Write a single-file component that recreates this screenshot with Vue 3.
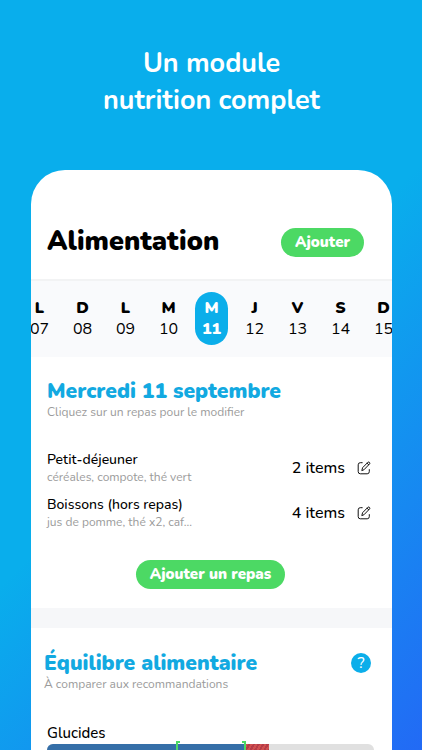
<template>
    <div class="page">
        <h1 class="tagline">Un module<br />nutrition complet</h1>

        <main class="phone">
            <header class="top-bar">
                <h2 class="top-title">Alimentation</h2>
                <button type="button" class="btn">Ajouter</button>
            </header>

            <nav class="days" aria-label="Jours">
                <button v-for="day in days" :key="day.num" type="button" class="day"
                    :class="{ active: day.num == selected }" @click="selected = day.num">
                    <span class="day-pill">
                        <b class="day-name">{{ day.name }}</b>
                        <span class="day-num">{{ day.num }}</span>
                    </span>
                </button>
            </nav>

            <section class="meals">
                <h3 class="section-title">Mercredi 11 septembre</h3>
                <p class="hint">Cliquez sur un repas pour le modifier</p>

                <ul class="meal-list">
                    <li v-for="meal in meals" :key="meal.name" class="meal">
                        <div class="meal-text">
                            <p class="meal-name">{{ meal.name }}</p>
                            <p class="meal-detail">{{ meal.detail }}</p>
                        </div>
                        <span class="meal-count">{{ meal.count }} items</span>
                        <button type="button" class="edit" :aria-label="`Modifier ${meal.name}`">
                            <svg viewBox="0 0 14 14" width="14" height="14" fill="none" stroke="#111"
                                stroke-linecap="round" stroke-linejoin="round">
                                <path d="M5.2 1.7H3.3Q1.2 1.7 1.2 3.8V10.6Q1.2 12.8 3.3 12.8H10.2Q12.3 12.8 12.3 10.6V8.6" />
                                <path d="M4.9 9.2L5.6 6.7L11 1.2Q11.7.7 12.5 1.4Q13.2 2.2 12.6 2.9L7.2 8.5Z" />
                                <path d="M10.1 2.2L11.7 3.8" />
                            </svg>
                        </button>
                    </li>
                </ul>

                <button type="button" class="btn">Ajouter un repas</button>
            </section>

            <section class="balance">
                <div class="balance-head">
                    <div>
                        <h3 class="section-title">Équilibre alimentaire</h3>
                        <p class="hint">À comparer aux recommandations</p>
                    </div>
                    <button type="button" class="help" aria-label="Aide">?</button>
                </div>

                <div v-for="item in nutrients" :key="item.name" class="nutrient">
                    <p class="nutrient-name">{{ item.name }}</p>
                    <div class="gauge">
                        <div class="track">
                            <div class="fill" :style="{ width: item.fill + '%' }"></div>
                            <div class="excess" :style="{ width: item.excess + '%' }"></div>
                        </div>
                        <div class="target" :style="{ left: item.from + '%', width: item.to - item.from + '%' }"></div>
                    </div>
                </div>
            </section>
        </main>
    </div>
</template>

<script setup>
import { ref } from "vue";

const selected = ref("11");

const days = [
    { name: "L", num: "07" },
    { name: "D", num: "08" },
    { name: "L", num: "09" },
    { name: "M", num: "10" },
    { name: "M", num: "11" },
    { name: "J", num: "12" },
    { name: "V", num: "13" },
    { name: "S", num: "14" },
    { name: "D", num: "15" },
];

const meals = [
    { name: "Petit-déjeuner", detail: "céréales, compote, thé vert", count: 2 },
    { name: "Boissons (hors repas)", detail: "jus de pomme, thé x2, caf...", count: 4 },
];

// all values are percentages of the gauge
const nutrients = [
    { name: "Glucides", fill: 61, excess: 7, from: 39.5, to: 61 },
];
</script>

<style>
body {
    margin: 0;
}
</style>

<style scoped>
.page {
    display: flex;
    flex-direction: column;
    box-sizing: border-box;
    height: 100vh;
    padding: 45px 30px 0 31px;
    overflow: hidden;
    background: linear-gradient(135deg, #09aeec 0%, #09aeec 50%, #226af5 100%);
    color: #000;
    font-family: Nunito, Lato, sans-serif;
}

h1,
h2,
h3,
p,
ul {
    margin: 0;
    padding: 0;
}

button {
    padding: 0;
    border: 0;
    background: none;
    color: inherit;
    font-family: inherit;
    cursor: pointer;
}

.tagline {
    color: #fff;
    font-size: 27px;
    font-weight: 700;
    line-height: 37px;
    text-align: center;
}

.phone {
    flex: 1;
    min-height: 0;
    margin-top: 51px;
    overflow: hidden;
    border-radius: 34px 34px 0 0;
    background: #fff;
}

.top-bar {
    display: flex;
    align-items: center;
    justify-content: space-between;
    padding: 57px 28px 22px 16px;
    border-bottom: 2px solid #f2f3f4;
}

.top-title {
    font-size: 27px;
    font-weight: 900;
    line-height: 30px;
}

.btn {
    height: 29px;
    padding: 0 14px;
    border-radius: 15px;
    background: #4cd964;
    color: #fff;
    font-size: 15px;
    font-weight: 900;
    line-height: 29px;
}

.days {
    display: flex;
    justify-content: center;
    padding: 11px 0 12px;
    background: #f9fafc;
}

.day {
    display: flex;
    flex: none;
    justify-content: center;
    width: 43px;
}

.day-pill {
    display: flex;
    flex-direction: column;
    box-sizing: border-box;
    width: 33px;
    height: 53px;
    padding-top: 6px;
    border-radius: 17px;
    font-size: 16px;
    line-height: 21px;
}

.day-name {
    font-weight: 900;
}

.active .day-pill {
    background: #0baeea;
    color: #fff;
    font-weight: 900;
}

.meals {
    padding: 21px 18px 19px 16px;
    border-bottom: 20px solid #f6f7f9;
    text-align: center;
}

.section-title {
    color: #12a9e1;
    font-size: 21px;
    font-weight: 900;
    line-height: 26px;
    text-align: left;
}

.hint {
    color: #9b9b9b;
    font-size: 12px;
    line-height: 16px;
    text-align: left;
}

.meal-list {
    margin: 31px 3px 30px 0;
    list-style: none;
    text-align: left;
}

.meal {
    display: flex;
    align-items: center;
}

.meal + .meal {
    margin-top: 11px;
}

.meal-text {
    flex: 1;
}

.meal-name {
    font-size: 14px;
    font-weight: 500;
    line-height: 18px;
}

.meal-detail {
    color: #9b9b9b;
    font-size: 12px;
    line-height: 16px;
}

.meal-count {
    font-size: 16px;
    font-weight: 500;
}

.edit {
    display: flex;
    margin-left: 12px;
}

.balance {
    padding: 22px 18px 24px 16px;
}

.balance-head {
    display: flex;
    align-items: flex-start;
    justify-content: space-between;
    margin-left: -3px;
}

.help {
    width: 20px;
    height: 20px;
    margin: 3px 3px 0 0;
    border-radius: 50%;
    background: #0baeea;
    color: #fff;
    font-size: 16px;
    line-height: 20px;
}

.nutrient {
    margin-top: 30px;
}

.nutrient-name {
    font-size: 15px;
    font-weight: 500;
    line-height: 22px;
}

.gauge {
    position: relative;
}

.track {
    display: flex;
    height: 14px;
    overflow: hidden;
    border-radius: 6px;
    background: #e0e0e0;
}

.fill {
    background: #356fa8;
}

.excess {
    background: repeating-linear-gradient(120deg, #d0504f 0 2px, #b63c48 2px 4px);
}

.target {
    position: absolute;
    top: -3px;
    bottom: -3px;
}

.target::before,
.target::after {
    position: absolute;
    top: 0;
    bottom: 0;
    width: 2px;
    border: 2px solid #4cd964;
    content: "";
}

.target::before {
    left: 0;
    border-right: 0;
}

.target::after {
    right: 0;
    border-left: 0;
}
</style>
